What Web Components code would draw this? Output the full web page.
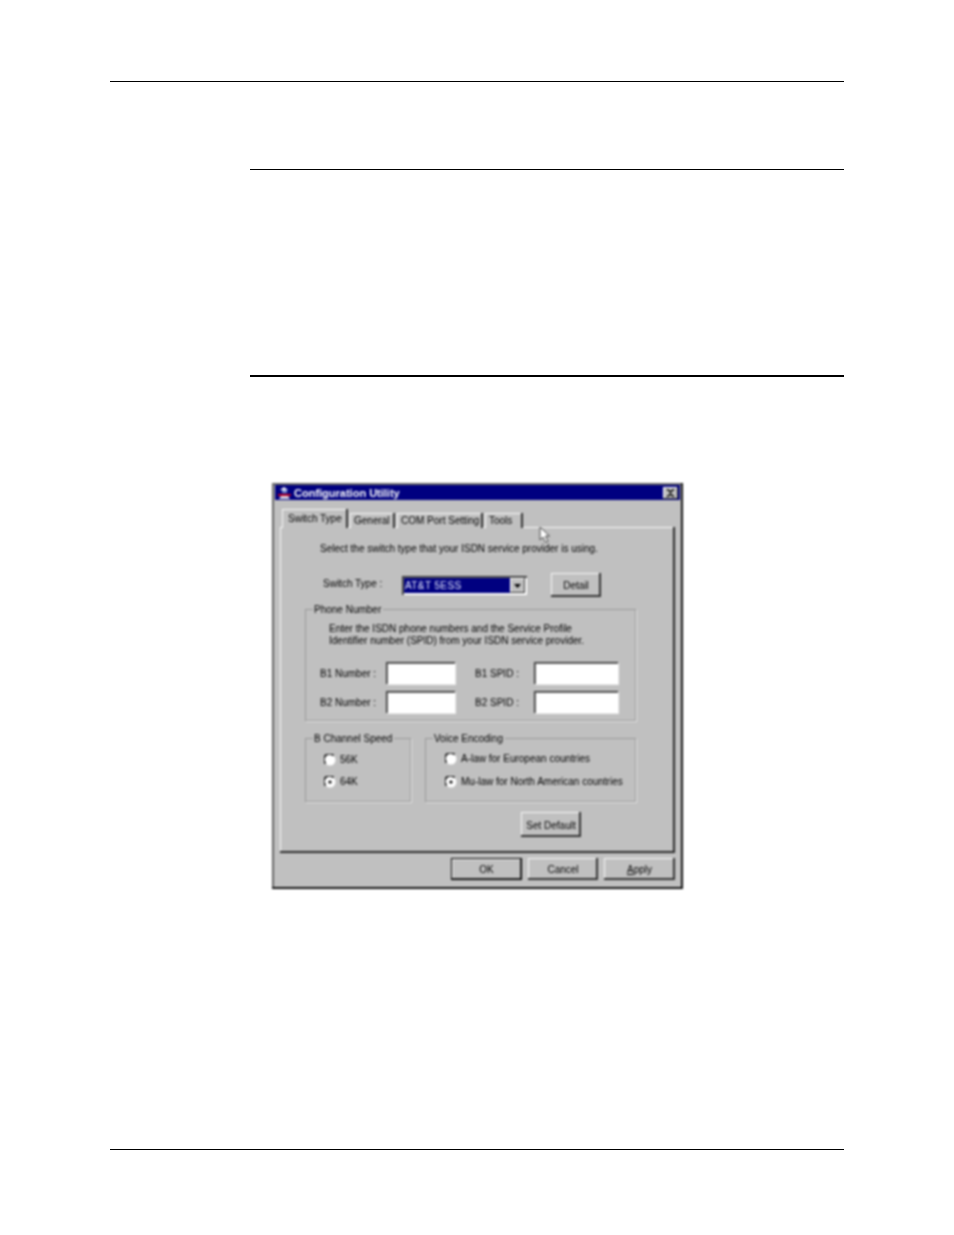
<!DOCTYPE html>
<html>
<head>
<meta charset="utf-8">
<title>Configuration Utility</title>
<style>
html, body { margin: 0; background: #fff; }
</style>
</head>
<body>
<doc-page>
  <win-dialog title="Configuration Utility">
    <win-tabs slot="tabs">
      <win-tab active>Switch Type</win-tab>
      <win-tab style="width:45px">General</win-tab>
      <win-tab style="width:86px">COM Port Setting</win-tab>
      <win-tab style="width:38px">Tools</win-tab>
    </win-tabs>

    <switch-panel></switch-panel>

    <win-button slot="footer" default style="width:71px;height:22px">OK</win-button>
    <win-button slot="footer" style="width:70px;height:22px">Cancel</win-button>
    <win-button slot="footer" style="width:71px;height:22px"><u>A</u>pply</win-button>
  </win-dialog>
</doc-page>

<script>
const FONT = `"Liberation Sans", Arial, sans-serif`

class DocPage extends HTMLElement {
  constructor() {
    super()
    this.attachShadow({ mode: "open" })
    this.shadowRoot.innerHTML = `
      <style>
        :host { display: block; width: 954px; height: 1235px; box-sizing: border-box; padding: 81px 110px 0; font-family: ${FONT}; position: relative; }
        .rule { height: 1px; background: #000; }
        .section { margin-left: 140px; }
        .one { margin-top: 87px; }
        .two { margin-top: 205px; height: 2px; background: #000; }
        .stage { margin: 106px 0 0 162px; }
        .foot { margin-top: 260px; }
      </style>
      <div class="rule"></div>
      <div class="rule section one"></div>
      <div class="rule section two"></div>
      <div class="stage"><slot></slot></div>
      <div class="rule foot"></div>
      <svg style="position:absolute;left:539px;top:526px;filter:blur(.8px)" width="13" height="18" viewBox="0 0 13 18">
        <path d="M1 1v13l3-3 2.500 5.500 2.500-1-2.500-5.500h4z" fill="#fff" stroke="#444" stroke-width="1"/>
      </svg>`
  }
}

class WinDialog extends HTMLElement {
  constructor() {
    super()
    this.attachShadow({ mode: "open" })
    const title = this.getAttribute("title")
    this.shadowRoot.innerHTML = `
      <style>
        :host { display: block; width: 411px; height: 406px; box-sizing: border-box; padding: 2px 3px 0; background: #c0c0c0; color: #000;
          font: 10px/14px ${FONT}; box-shadow: inset -2px -2px 0 #111, inset 2px 2px 0 #666; filter: blur(.8px); }
        .bar { height: 15px; background: #000080; color: #fff; font-size: 11px; font-weight: bold; display: flex; align-items: center; padding: 0 2px; gap: 2px; }
        .bar span { flex: 1; }
        .x { width: 15px; height: 12px; background: #c0c0c0; box-shadow: inset -1px -1px 0 #333, inset 1px 1px 0 #fff; display: flex; align-items: center; justify-content: center; }
        .tabs { margin: 9px 0 -1px 7px; position: relative; z-index: 1; }
        .panel { margin-left: 5px; width: 395px; height: 326px; box-sizing: border-box; background: #c0c0c0;
          box-shadow: inset -2px -2px 0 #2a2a2a, inset 1px 1px 0 #f8f8f8; padding: 15px 0 0 25px; }
        .footer { display: flex; justify-content: flex-end; gap: 6px; margin: 5px 5px 0 0; }
      </style>
      <div class="bar">
        <svg width="15" height="14" viewBox="0 0 15 14">
          <path d="M7 1l4 3H3z" fill="#fff"/><rect x="5" y="4" width="5" height="3" fill="#7b8bd0"/>
          <path d="M1 8h13v2H1z" fill="#c00020"/><path d="M4 10h7l2 3H2z" fill="#d8d8e8"/>
        </svg>
        <span>${title}</span>
        <div class="x">
          <svg width="9" height="8" viewBox="0 0 9 8"><path d="M1 0l3.500 3L8 0M1 8l3.500-3L8 8" fill="none" stroke="#000" stroke-width="1.600"/></svg>
        </div>
      </div>
      <div class="tabs"><slot name="tabs"></slot></div>
      <div class="panel"><slot></slot></div>
      <div class="footer"><slot name="footer"></slot></div>`
  }
}

class WinTabs extends HTMLElement {
  constructor() {
    super()
    this.attachShadow({ mode: "open" })
    this.shadowRoot.innerHTML = `
      <style>
        :host { display: flex; align-items: flex-end; gap: 2px; height: 19px; }
      </style>
      <slot></slot>`
  }
}

class WinTab extends HTMLElement {
  constructor() {
    super()
    this.attachShadow({ mode: "open" })
    this.shadowRoot.innerHTML = `
      <style>
        :host { display: flex; align-items: center; height: 15px; box-sizing: border-box; background: #c0c0c0; white-space: nowrap;
          box-shadow: inset -2px 0 0 #333, inset 1px 1px 0 #f8f8f8; padding-left: 4px; }
        :host([active]) { height: 19px; width: 66px; padding: 0 0 0 6px; }
      </style>
      <slot></slot>`
  }
}

class WinButton extends HTMLElement {
  constructor() {
    super()
    this.attachShadow({ mode: "open" })
    this.shadowRoot.innerHTML = `
      <style>
        :host { display: flex; flex: none; align-items: center; justify-content: center; box-sizing: border-box; padding-top: 2px; background: #c0c0c0; white-space: nowrap;
          box-shadow: inset -2px -2px 0 #333, inset 1px 1px 0 #f8f8f8; }
        :host([default]) { box-shadow: inset 0 0 0 1px #000, inset -2px -2px 0 #333, inset 2px 2px 0 #eee; }
      </style>
      <slot></slot>`
  }
}

class WinGroup extends HTMLElement {
  constructor() {
    super()
    this.attachShadow({ mode: "open" })
    this.shadowRoot.innerHTML = `
      <style>
        :host { display: block; box-sizing: border-box; }
        fieldset { margin: 0; min-width: 0; height: 100%; box-sizing: border-box; border: 1px solid #999; box-shadow: 1px 1px 0 #e4e4e4; padding: 0; }
        legend { padding: 2px 2px 0 1px; margin-left: 7px; line-height: 14px; white-space: nowrap; }
        .body { padding: var(--pad, 0); }
      </style>
      <fieldset>
        <legend>${this.getAttribute("label")}</legend>
        <div class="body"><slot></slot></div>
      </fieldset>`
  }
}

class WinField extends HTMLElement {
  constructor() {
    super()
    this.attachShadow({ mode: "open" })
    const lw = this.getAttribute("label-width")
    const iw = this.getAttribute("input-width")
    this.shadowRoot.innerHTML = `
      <style>
        :host { display: flex; align-items: center; }
        label { width: ${lw}px; flex: none; white-space: nowrap; padding-top: 2px; }
        .box { width: ${iw}px; height: 22px; background: #fff; box-shadow: inset 1px 1px 0 #333, inset 2px 2px 0 #777, 1px 1px 0 #eee; }
      </style>
      <label>${this.getAttribute("label")}</label>
      <div class="box"></div>`
  }
}

class WinRadio extends HTMLElement {
  constructor() {
    super()
    this.attachShadow({ mode: "open" })
    const dot = this.hasAttribute("checked") ? `<circle cx="6" cy="6" r="1.600" fill="#000"/>` : ""
    this.shadowRoot.innerHTML = `
      <style>
        :host { display: flex; align-items: center; gap: 4px; height: 14px; white-space: nowrap; }
        svg { flex: none; }
      </style>
      <svg width="12" height="12" viewBox="0 0 12 12">
        <circle cx="6" cy="6" r="5.500" fill="#fff"/>
        <path d="M1.500 9.500A5.200 5.200 0 0 1 9.500 1.500" fill="none" stroke="#222" stroke-width="1.800"/>
        ${dot}
      </svg>
      <slot></slot>`
  }
}

class WinCombo extends HTMLElement {
  constructor() {
    super()
    this.attachShadow({ mode: "open" })
    this.shadowRoot.innerHTML = `
      <style>
        :host { display: flex; width: 125px; height: 19px; box-sizing: border-box; padding: 2px; background: #fff; box-shadow: inset 1px 1px 0 #333, inset 2px 2px 0 #666; }
        .val { flex: 1; background: #000080; color: #e8ecff; padding-left: 1px; line-height: 15px; letter-spacing: .4px; }
        .btn { width: 15px; background: #c0c0c0; box-shadow: inset -1px -1px 0 #333, inset 1px 1px 0 #fff; display: flex; align-items: center; justify-content: center; }
      </style>
      <div class="val"><slot></slot></div>
      <div class="btn"><svg width="7" height="4" viewBox="0 0 7 4"><path d="M0 0h7L3.500 4z" fill="#000"/></svg></div>`
  }
}

class SwitchPanel extends HTMLElement {
  constructor() {
    super()
    this.attachShadow({ mode: "open" })
    this.shadowRoot.innerHTML = `
      <style>
        :host { display: block; }
        .intro { margin-left: 15px; white-space: nowrap; }
        .type { display: flex; align-items: flex-start; margin: 17px 0 4px 18px; height: 24px; }
        .type .lbl { width: 79px; margin-top: 4px; white-space: nowrap; }
        .type win-combo { margin-top: 3px; }
        .type win-button { margin-left: 24px; }
        .phone { height: 120px; width: 331px; --pad: 6px 0 0 14px; }
        .phone p { margin: 0 0 15px 9px; line-height: 12px; white-space: nowrap; }
        .rows { display: flex; flex-direction: column; gap: 7px; }
        .row { display: flex; gap: 19px; }
        .lower { display: flex; gap: 14px; margin-top: 9px; }
        .speed { width: 106px; height: 72px; --pad: 7px 0 0 18px; }
        .voice { width: 211px; height: 72px; --pad: 6px 0 0 19px; }
        .stack { display: flex; flex-direction: column; gap: 8px; }
        .voice .stack { gap: 9px; }
        .reset { margin: 10px 0 0 216px; }
      </style>
      <div class="intro">Select the switch type that your ISDN service provider is using.</div>
      <div class="type">
        <div class="lbl">Switch Type :</div>
        <win-combo>AT&amp;T 5ESS</win-combo>
        <win-button style="width:50px;height:24px">Detail</win-button>
      </div>
      <win-group class="phone" label="Phone Number">
        <p>Enter the ISDN phone numbers and the Service Profile<br>Identifier number (SPID) from your ISDN service provider.</p>
        <div class="rows">
          <div class="row">
            <win-field label="B1 Number :" label-width="66" input-width="69"></win-field>
            <win-field label="B1 SPID :" label-width="59" input-width="84" style="margin-left:1px"></win-field>
          </div>
          <div class="row">
            <win-field label="B2 Number :" label-width="66" input-width="69"></win-field>
            <win-field label="B2 SPID :" label-width="59" input-width="84" style="margin-left:1px"></win-field>
          </div>
        </div>
      </win-group>
      <div class="lower">
        <win-group class="speed" label="B Channel Speed">
          <div class="stack">
            <win-radio>56K</win-radio>
            <win-radio checked>64K</win-radio>
          </div>
        </win-group>
        <win-group class="voice" label="Voice Encoding">
          <div class="stack">
            <win-radio>A-law for European countries</win-radio>
            <win-radio checked>Mu-law for North American countries</win-radio>
          </div>
        </win-group>
      </div>
      <win-button class="reset" style="width:60px;height:25px">Set Default</win-button>`
  }
}

window.customElements.define("win-tabs", WinTabs)
window.customElements.define("win-tab", WinTab)
window.customElements.define("win-button", WinButton)
window.customElements.define("win-group", WinGroup)
window.customElements.define("win-field", WinField)
window.customElements.define("win-radio", WinRadio)
window.customElements.define("win-combo", WinCombo)
window.customElements.define("switch-panel", SwitchPanel)
window.customElements.define("win-dialog", WinDialog)
window.customElements.define("doc-page", DocPage)
</script>
</body>
</html>
